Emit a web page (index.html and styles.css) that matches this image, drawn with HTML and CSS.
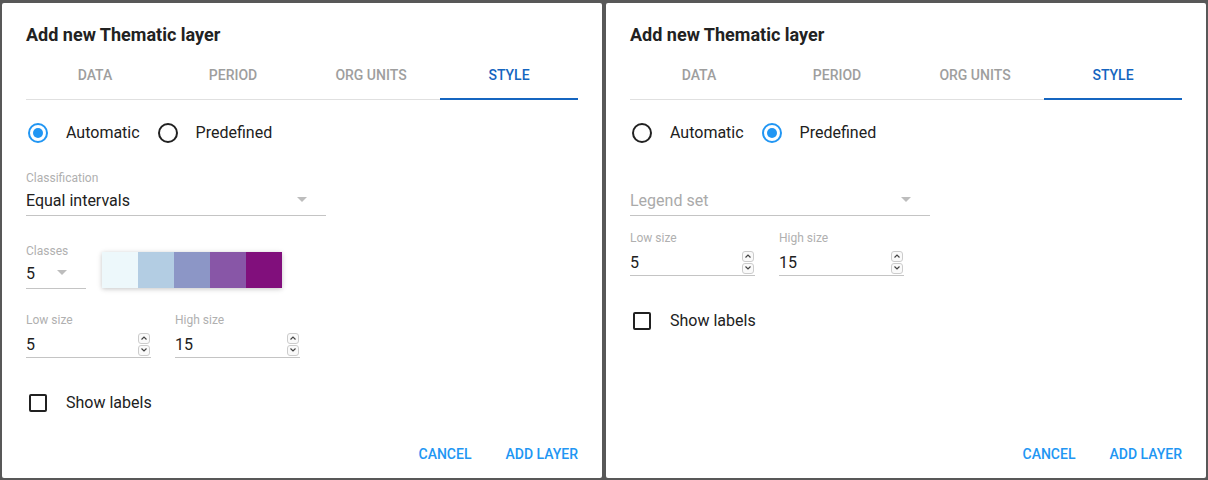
FILE: index.html
```html
<!DOCTYPE html>
<html>
<head>
<meta charset="utf-8">
<link rel="stylesheet" href="styles.css">
</head>
<body>
<div class="dialog">
  <div class="title">Add new Thematic layer</div>
  <div class="tabs">
    <div class="tab">Data</div>
    <div class="tab">Period</div>
    <div class="tab">Org units</div>
    <div class="tab active">Style</div>
  </div>
  <div class="radios">
    <div class="option"><span class="radio checked"></span><span class="opt-label">Automatic</span></div>
    <div class="option"><span class="radio"></span><span class="opt-label">Predefined</span></div>
  </div>
  <div class="field select wide mt-class">
    <div class="flabel">Classification</div>
    <div class="fvalue"><span class="vtext">Equal intervals</span><span class="arrow"></span></div>
  </div>
  <div class="classes-row">
    <div class="field select narrow">
      <div class="flabel">Classes</div>
      <div class="fvalue"><span class="vtext">5</span><span class="arrow"></span></div>
    </div>
    <div class="swatches">
      <span class="sw" style="background:#edf8fb"></span>
      <span class="sw" style="background:#b3cde3"></span>
      <span class="sw" style="background:#8c96c6"></span>
      <span class="sw" style="background:#8856a7"></span>
      <span class="sw" style="background:#810f7c"></span>
    </div>
  </div>
  <div class="sizes mt-sizes-a">
    <div class="field num">
      <div class="flabel">Low size</div>
      <div class="fvalue"><span class="vtext">5</span>
        <span class="spin"><span class="sbtn"><svg width="8" height="6" viewBox="0 0 8 6"><path d="M1.5 4.5 L4 2 L6.5 4.5" fill="none" stroke="#444" stroke-width="1.2"/></svg></span><span class="sbtn"><svg width="8" height="6" viewBox="0 0 8 6"><path d="M1.5 1.5 L4 4 L6.5 1.5" fill="none" stroke="#444" stroke-width="1.2"/></svg></span></span>
      </div>
    </div>
    <div class="field num">
      <div class="flabel">High size</div>
      <div class="fvalue"><span class="vtext">15</span>
        <span class="spin"><span class="sbtn"><svg width="8" height="6" viewBox="0 0 8 6"><path d="M1.5 4.5 L4 2 L6.5 4.5" fill="none" stroke="#444" stroke-width="1.2"/></svg></span><span class="sbtn"><svg width="8" height="6" viewBox="0 0 8 6"><path d="M1.5 1.5 L4 4 L6.5 1.5" fill="none" stroke="#444" stroke-width="1.2"/></svg></span></span>
      </div>
    </div>
  </div>
  <div class="check mt-check-a"><span class="box"></span><span class="opt-label">Show labels</span></div>
  <div class="actions">
    <span class="btn">Cancel</span>
    <span class="btn">Add layer</span>
  </div>
</div>

<div class="dialog">
  <div class="title">Add new Thematic layer</div>
  <div class="tabs">
    <div class="tab">Data</div>
    <div class="tab">Period</div>
    <div class="tab">Org units</div>
    <div class="tab active">Style</div>
  </div>
  <div class="radios">
    <div class="option"><span class="radio"></span><span class="opt-label">Automatic</span></div>
    <div class="option"><span class="radio checked"></span><span class="opt-label">Predefined</span></div>
  </div>
  <div class="field select wide mt-class">
    <div class="flabel"></div>
    <div class="fvalue"><span class="vtext placeholder">Legend set</span><span class="arrow"></span></div>
  </div>
  <div class="sizes mt-sizes-b">
    <div class="field num">
      <div class="flabel">Low size</div>
      <div class="fvalue"><span class="vtext">5</span>
        <span class="spin"><span class="sbtn"><svg width="8" height="6" viewBox="0 0 8 6"><path d="M1.5 4.5 L4 2 L6.5 4.5" fill="none" stroke="#444" stroke-width="1.2"/></svg></span><span class="sbtn"><svg width="8" height="6" viewBox="0 0 8 6"><path d="M1.5 1.5 L4 4 L6.5 1.5" fill="none" stroke="#444" stroke-width="1.2"/></svg></span></span>
      </div>
    </div>
    <div class="field num">
      <div class="flabel">High size</div>
      <div class="fvalue"><span class="vtext">15</span>
        <span class="spin"><span class="sbtn"><svg width="8" height="6" viewBox="0 0 8 6"><path d="M1.5 4.5 L4 2 L6.5 4.5" fill="none" stroke="#444" stroke-width="1.2"/></svg></span><span class="sbtn"><svg width="8" height="6" viewBox="0 0 8 6"><path d="M1.5 1.5 L4 4 L6.5 1.5" fill="none" stroke="#444" stroke-width="1.2"/></svg></span></span>
      </div>
    </div>
  </div>
  <div class="check mt-check-b"><span class="box"></span><span class="opt-label">Show labels</span></div>
  <div class="actions">
    <span class="btn">Cancel</span>
    <span class="btn">Add layer</span>
  </div>
</div>
</body>
</html>
```

FILE: styles.css
```css
* { box-sizing: border-box; }
html, body { height: 100%; }
body {
  margin: 0;
  padding: 3px 2px 2px 2px;
  background: #585858;
  display: flex;
  gap: 4px;
  font-family: Roboto, "Liberation Sans", sans-serif;
  color: rgba(0,0,0,0.87);
}
.dialog {
  width: 600px;
  height: 475px;
  background: #fff;
  border-radius: 2px;
  padding: 21px 24px 14px 24px;
  display: flex;
  flex-direction: column;
}
.title {
  font-size: 18px;
  line-height: 22px;
  font-weight: 700;
  color: #222;
}
.tabs {
  margin-top: 4px;
  height: 50px;
  display: flex;
  box-shadow: inset 0 -1px 0 #e0e0e0;
}
.tab {
  flex: 1;
  height: 50px;
  display: flex;
  align-items: center;
  justify-content: center;
  padding-top: 1px;
  border-bottom: 2px solid transparent;
  font-size: 14px;
  font-weight: 500;
  text-transform: uppercase;
  color: #9e9e9e;
}
.tab.active {
  color: #1565c0;
  border-bottom-color: #1565c0;
}
.radios {
  margin-top: 21px;
  display: flex;
  gap: 16px;
  height: 24px;
}
.option {
  display: flex;
  align-items: center;
  gap: 16px;
}
.radio {
  width: 24px;
  height: 24px;
  display: flex;
  align-items: center;
  justify-content: center;
  position: relative;
}
.radio::before {
  content: "";
  width: 20px;
  height: 20px;
  border-radius: 50%;
  border: 2px solid #212121;
  box-sizing: border-box;
}
.radio.checked::before {
  border-color: #2196f3;
}
.radio.checked::after {
  content: "";
  position: absolute;
  width: 10px;
  height: 10px;
  border-radius: 50%;
  background: #2196f3;
  left: 7px;
  top: 7px;
}
.opt-label {
  font-size: 16px;
  line-height: 24px;
  color: #212121;
}
.field { display: flex; flex-direction: column; }
.flabel {
  font-size: 12px;
  line-height: 16px;
  height: 16px;
  color: #b0b0b0;
}
.fvalue {
  display: flex;
  align-items: center;
  font-size: 16px;
  line-height: 24px;
  border-bottom: 1px solid #c4c4c4;
  color: #212121;
}
.vtext { flex: 1; }
.placeholder { color: #aaa; }
.select .fvalue { margin-top: 3px; padding-bottom: 2px; }
.num .fvalue { margin-top: 5px; }
.wide { width: 300px; }
.narrow { width: 60px; }
.mt-class { margin-top: 25px; }
.arrow {
  width: 0;
  height: 0;
  border-left: 5px solid transparent;
  border-right: 5px solid transparent;
  border-top: 5px solid #bdbdbd;
  margin-right: 19px;
  margin-top: -4px;
}
.classes-row {
  margin-top: 27px;
  display: flex;
  align-items: flex-end;
  gap: 16px;
}
.swatches {
  display: flex;
  height: 36px;
  margin-bottom: 1px;
  box-shadow: 0 1px 6px rgba(0,0,0,0.12), 0 1px 4px rgba(0,0,0,0.12);
}
.sw { width: 36px; height: 36px; }
.sizes {
  display: flex;
  gap: 24px;
}
.sizes .field { width: 125px; }
.mt-sizes-a { margin-top: 23px; }
.mt-sizes-b { margin-top: 14px; }
.spin {
  display: flex;
  flex-direction: column;
  gap: 1px;
  margin-right: 1px;
  margin-top: -2px;
}
.sbtn {
  width: 12px;
  height: 11px;
  border: 1px solid #ccc;
  border-radius: 3px;
  display: flex;
  align-items: center;
  justify-content: center;
  background: #fafafa;
}
.check {
  display: flex;
  align-items: center;
  gap: 16px;
  height: 24px;
}
.box {
  width: 18px;
  height: 18px;
  border: 2px solid #212121;
  border-radius: 2px;
  margin-left: 3px;
  margin-right: 3px;
}
.mt-check-a { margin-top: 33px; }
.mt-check-b { margin-top: 33px; }
.actions {
  margin-top: auto;
  display: flex;
  justify-content: flex-end;
  gap: 34px;
  line-height: 20px;
}
.btn {
  font-size: 14px;
  font-weight: 500;
  text-transform: uppercase;
  color: #2196f3;
}
```
